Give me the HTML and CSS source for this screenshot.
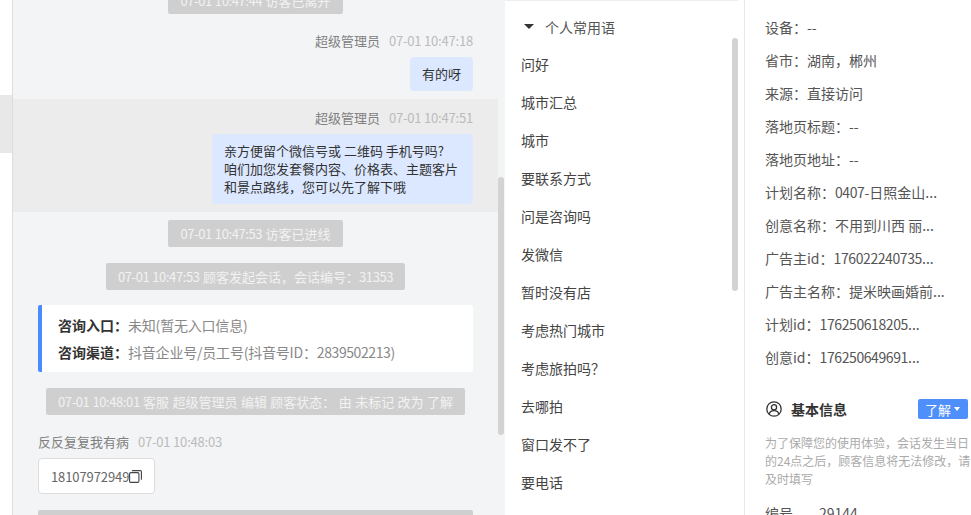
FILE: index.html
```html
<!DOCTYPE html>
<html lang="zh">
<head>
    <meta charset="UTF-8">
    <title>会话</title>
    <link rel="stylesheet" href="styles.css">
</head>
<body>
    <div class="container">
        <!-- 左侧窄栏 -->
        <div class="side-rail">
            <div class="rail-active"></div>
        </div>

        <!-- 聊天区域 -->
        <div class="chat">
            <div class="chat-inner">
                <div class="notice"><span class="num">07-01 10:47:44</span> 访客已离开</div>

                <div class="msg msg-right">
                    <div class="msg-meta"><span class="msg-name">超级管理员</span><span class="msg-time">07-01 10:47:18</span></div>
                    <div class="bubble">有的呀</div>
                </div>

                <div class="msg msg-right msg-active">
                    <div class="msg-meta"><span class="msg-name">超级管理员</span><span class="msg-time">07-01 10:47:51</span></div>
                    <div class="bubble bubble-long">亲方便留个微信号或 二维码 手机号吗?<br>咱们加您发套餐内容、价格表、主题客片<br>和景点路线，您可以先了解下哦</div>
                </div>

                <div class="notice"><span class="num">07-01 10:47:53</span> 访客已进线</div>
                <div class="notice"><span class="num">07-01 10:47:53</span> 顾客发起会话，会话编号：<span class="num">31353</span></div>

                <div class="source-card">
                    <div class="source-row"><b>咨询入口：</b><span class="source-value">未知(暂无入口信息)</span></div>
                    <div class="source-row"><b>咨询渠道：</b><span class="source-value">抖音企业号/员工号(抖音号ID：<span class="num">2839502213</span>)</span></div>
                </div>

                <div class="notice"><span class="num">07-01 10:48:01</span> 客服 超级管理员 编辑 顾客状态： 由 未标记 改为 了解</div>

                <div class="msg msg-left">
                    <div class="msg-meta"><span class="msg-name">反反复复我有病</span><span class="msg-time">07-01 10:48:03</span></div>
                    <div class="phone-card">
                        <span>18107972949</span>
                        <svg class="copy-icon" viewBox="0 0 13 13" fill="none" stroke="#444" stroke-width="1.1">
                            <rect x="0.6" y="2.6" width="9.3" height="9.8" rx="1.2"/>
                            <path d="M3 .6h8.2a1.2 1.2 0 0 1 1.2 1.2v8"/>
                        </svg>
                    </div>
                </div>

                <div class="notice notice-wide"></div>
            </div>
            <div class="scroll-thumb chat-thumb"></div>
        </div>

        <!-- 常用语 -->
        <div class="phrases">
            <div class="phrase-head"><i class="caret"></i>个人常用语</div>
            <div class="phrase-item">问好</div>
            <div class="phrase-item">城市汇总</div>
            <div class="phrase-item">城市</div>
            <div class="phrase-item">要联系方式</div>
            <div class="phrase-item">问是咨询吗</div>
            <div class="phrase-item">发微信</div>
            <div class="phrase-item">暂时没有店</div>
            <div class="phrase-item">考虑热门城市</div>
            <div class="phrase-item">考虑旅拍吗？</div>
            <div class="phrase-item">去哪拍</div>
            <div class="phrase-item">窗口发不了</div>
            <div class="phrase-item">要电话</div>
            <div class="scroll-thumb phrase-thumb"></div>
        </div>

        <!-- 顾客信息 -->
        <div class="info">
            <div class="info-row">设备：--</div>
            <div class="info-row">省市：湖南，郴州</div>
            <div class="info-row">来源：直接访问</div>
            <div class="info-row">落地页标题：--</div>
            <div class="info-row">落地页地址：--</div>
            <div class="info-row">计划名称：<span class="num">0407</span>-日照金山...</div>
            <div class="info-row">创意名称：不用到川西 丽...</div>
            <div class="info-row">广告主id：<span class="num">176022240735</span>...</div>
            <div class="info-row">广告主名称：提米映画婚前...</div>
            <div class="info-row">计划id：<span class="num">176250618205</span>...</div>
            <div class="info-row">创意id：<span class="num">176250649691</span>...</div>

            <div class="basic-head">
                <svg class="user-icon" viewBox="0 0 16 16" fill="none" stroke="#333" stroke-width="1.3">
                    <circle cx="8" cy="8" r="7.2"/>
                    <circle cx="8" cy="6.2" r="2.6"/>
                    <path d="M3.2 13.2c.4-2.2 2.3-3.6 4.8-3.6s4.4 1.4 4.8 3.6"/>
                </svg>
                <span class="basic-title">基本信息</span>
                <span class="status-tag">了解<i class="tag-caret"></i></span>
            </div>
            <div class="basic-note">为了保障您的使用体验，会话发生当日的24点之后，顾客信息将无法修改，请及时填写</div>
            <div class="basic-row"><span class="basic-label">编号</span>29144</div>
        </div>
    </div>
</body>
</html>
```

FILE: styles.css
```css
* {
    margin: 0;
    padding: 0;
    box-sizing: border-box;
}

body {
    height: 100vh;
    background: #fff;
    font-family: "Noto Sans CJK SC", "Noto Sans", sans-serif;
    font-size: 13px;
    color: #333;
    overflow: hidden;
}

.container {
    display: flex;
    height: 100vh;
    overflow: hidden;
}

.num {
    letter-spacing: -.4px;
}

/* 左侧窄栏 */
.side-rail {
    width: 13px;
    flex-shrink: 0;
    padding-top: 95px;
    border-right: 1px solid #ddd;
}

.rail-active {
    height: 58px;
    background: #e8e8e8;
}

/* 聊天区域 */
.chat {
    width: 492px;
    flex-shrink: 0;
    background: #f3f4f6;
    position: relative;
    overflow: hidden;
}

.chat-inner {
    display: flex;
    flex-direction: column;
    margin-top: -21px;
    padding-right: 7px;
}

.notice {
    align-self: center;
    height: 27px;
    line-height: 27px;
    padding: 0 12px;
    margin: 8px 0;
    border-radius: 2px;
    background: #cfcfcf;
    color: #f2f2f2;
    font-size: 13px;
    word-spacing: .5px;
    white-space: nowrap;
}

.notice-wide {
    align-self: stretch;
    margin: 8px 25px;
}

.msg {
    display: flex;
    flex-direction: column;
    padding: 10px 25px 8px;
}

.msg-right {
    align-items: flex-end;
}

.msg-left {
    align-items: flex-start;
}

.msg-active {
    background: #ececec;
}

.msg-meta {
    display: flex;
    gap: 9px;
    height: 18px;
    line-height: 18px;
    margin-bottom: 7px;
}

.msg-name {
    color: #808080;
}

.msg-time {
    color: #bbb;
    letter-spacing: -.2px;
}

.bubble {
    padding: 8px 12px;
    border-radius: 4px;
    background: #dce8ff;
    line-height: 18px;
}

.bubble-long {
    width: 261px;
}

.source-card {
    margin: 7px 25px 8px;
    padding: 7px 16px;
    height: 67px;
    border-left: 4px solid #4a8cff;
    border-radius: 2px;
    background: #fff;
    color: #888;
    font-size: 14px;
}

.source-row {
    height: 27px;
    line-height: 27px;
}

.source-row b {
    color: #333;
}

.source-value {
    letter-spacing: -.2px;
}

.phone-card {
    display: flex;
    align-items: center;
    height: 36px;
    padding: 0 12px;
    border: 1px solid #ddd;
    border-radius: 4px;
    background: #fff;
    color: #666;
    font-size: 13px;
    letter-spacing: -.1px;
}

.copy-icon {
    width: 13px;
    height: 13px;
}

.scroll-thumb {
    position: absolute;
    width: 6px;
    border-radius: 3px;
    background: #d3d3d3;
}

.chat-thumb {
    top: 177px;
    right: 1px;
    height: 258px;
}

/* 常用语 */
.phrases {
    width: 240px;
    flex-shrink: 0;
    padding-left: 16px;
    border-right: 1px solid #e8e8e8;
    position: relative;
}

.phrase-head {
    display: flex;
    align-items: center;
    height: 52px;
    margin: 0 6px 0 -16px;
    padding: 0 0 0 19px;
    border-top: 1px solid #eee;
    color: #555;
    font-size: 14px;
}

.caret {
    width: 0;
    height: 0;
    margin-right: 11px;
    border-left: 5px solid transparent;
    border-right: 5px solid transparent;
    border-top: 5px solid #333;
}

.phrase-item {
    height: 38px;
    line-height: 38px;
    font-size: 14px;
    color: #444;
}

.phrase-head + .phrase-item {
    margin-top: -7px;
}

.phrase-thumb {
    top: 38px;
    right: 6px;
    height: 253px;
}

/* 顾客信息 */
.info {
    flex: 1;
    padding: 11px 0 0 20px;
    min-width: 0;
}

.info-row {
    height: 33px;
    line-height: 33px;
    font-size: 14px;
    color: #555;
    white-space: nowrap;
}

.basic-head {
    display: flex;
    align-items: center;
    height: 20px;
    margin-top: 25px;
}

.user-icon {
    width: 16px;
    height: 16px;
    margin: 0 9px 0 1px;
}

.basic-title {
    flex: 1;
    font-size: 14px;
    font-weight: 700;
    color: #333;
}

.status-tag {
    display: flex;
    align-items: center;
    width: 50px;
    height: 20px;
    margin-right: 3px;
    padding-left: 7px;
    border-radius: 2px;
    background: #4f8ffb;
    color: #fff;
    font-size: 13px;
}

.tag-caret {
    width: 0;
    height: 0;
    margin-left: 3px;
    border-left: 3.5px solid transparent;
    border-right: 3.5px solid transparent;
    border-top: 4px solid #fff;
}

.basic-note {
    margin-top: 15px;
    font-size: 12px;
    line-height: 18px;
    color: #aaa;
}

.basic-row {
    margin-top: 15px;
    font-size: 14px;
    color: #555;
    white-space: nowrap;
}

.basic-label {
    display: inline-block;
    width: 54px;
}
```
